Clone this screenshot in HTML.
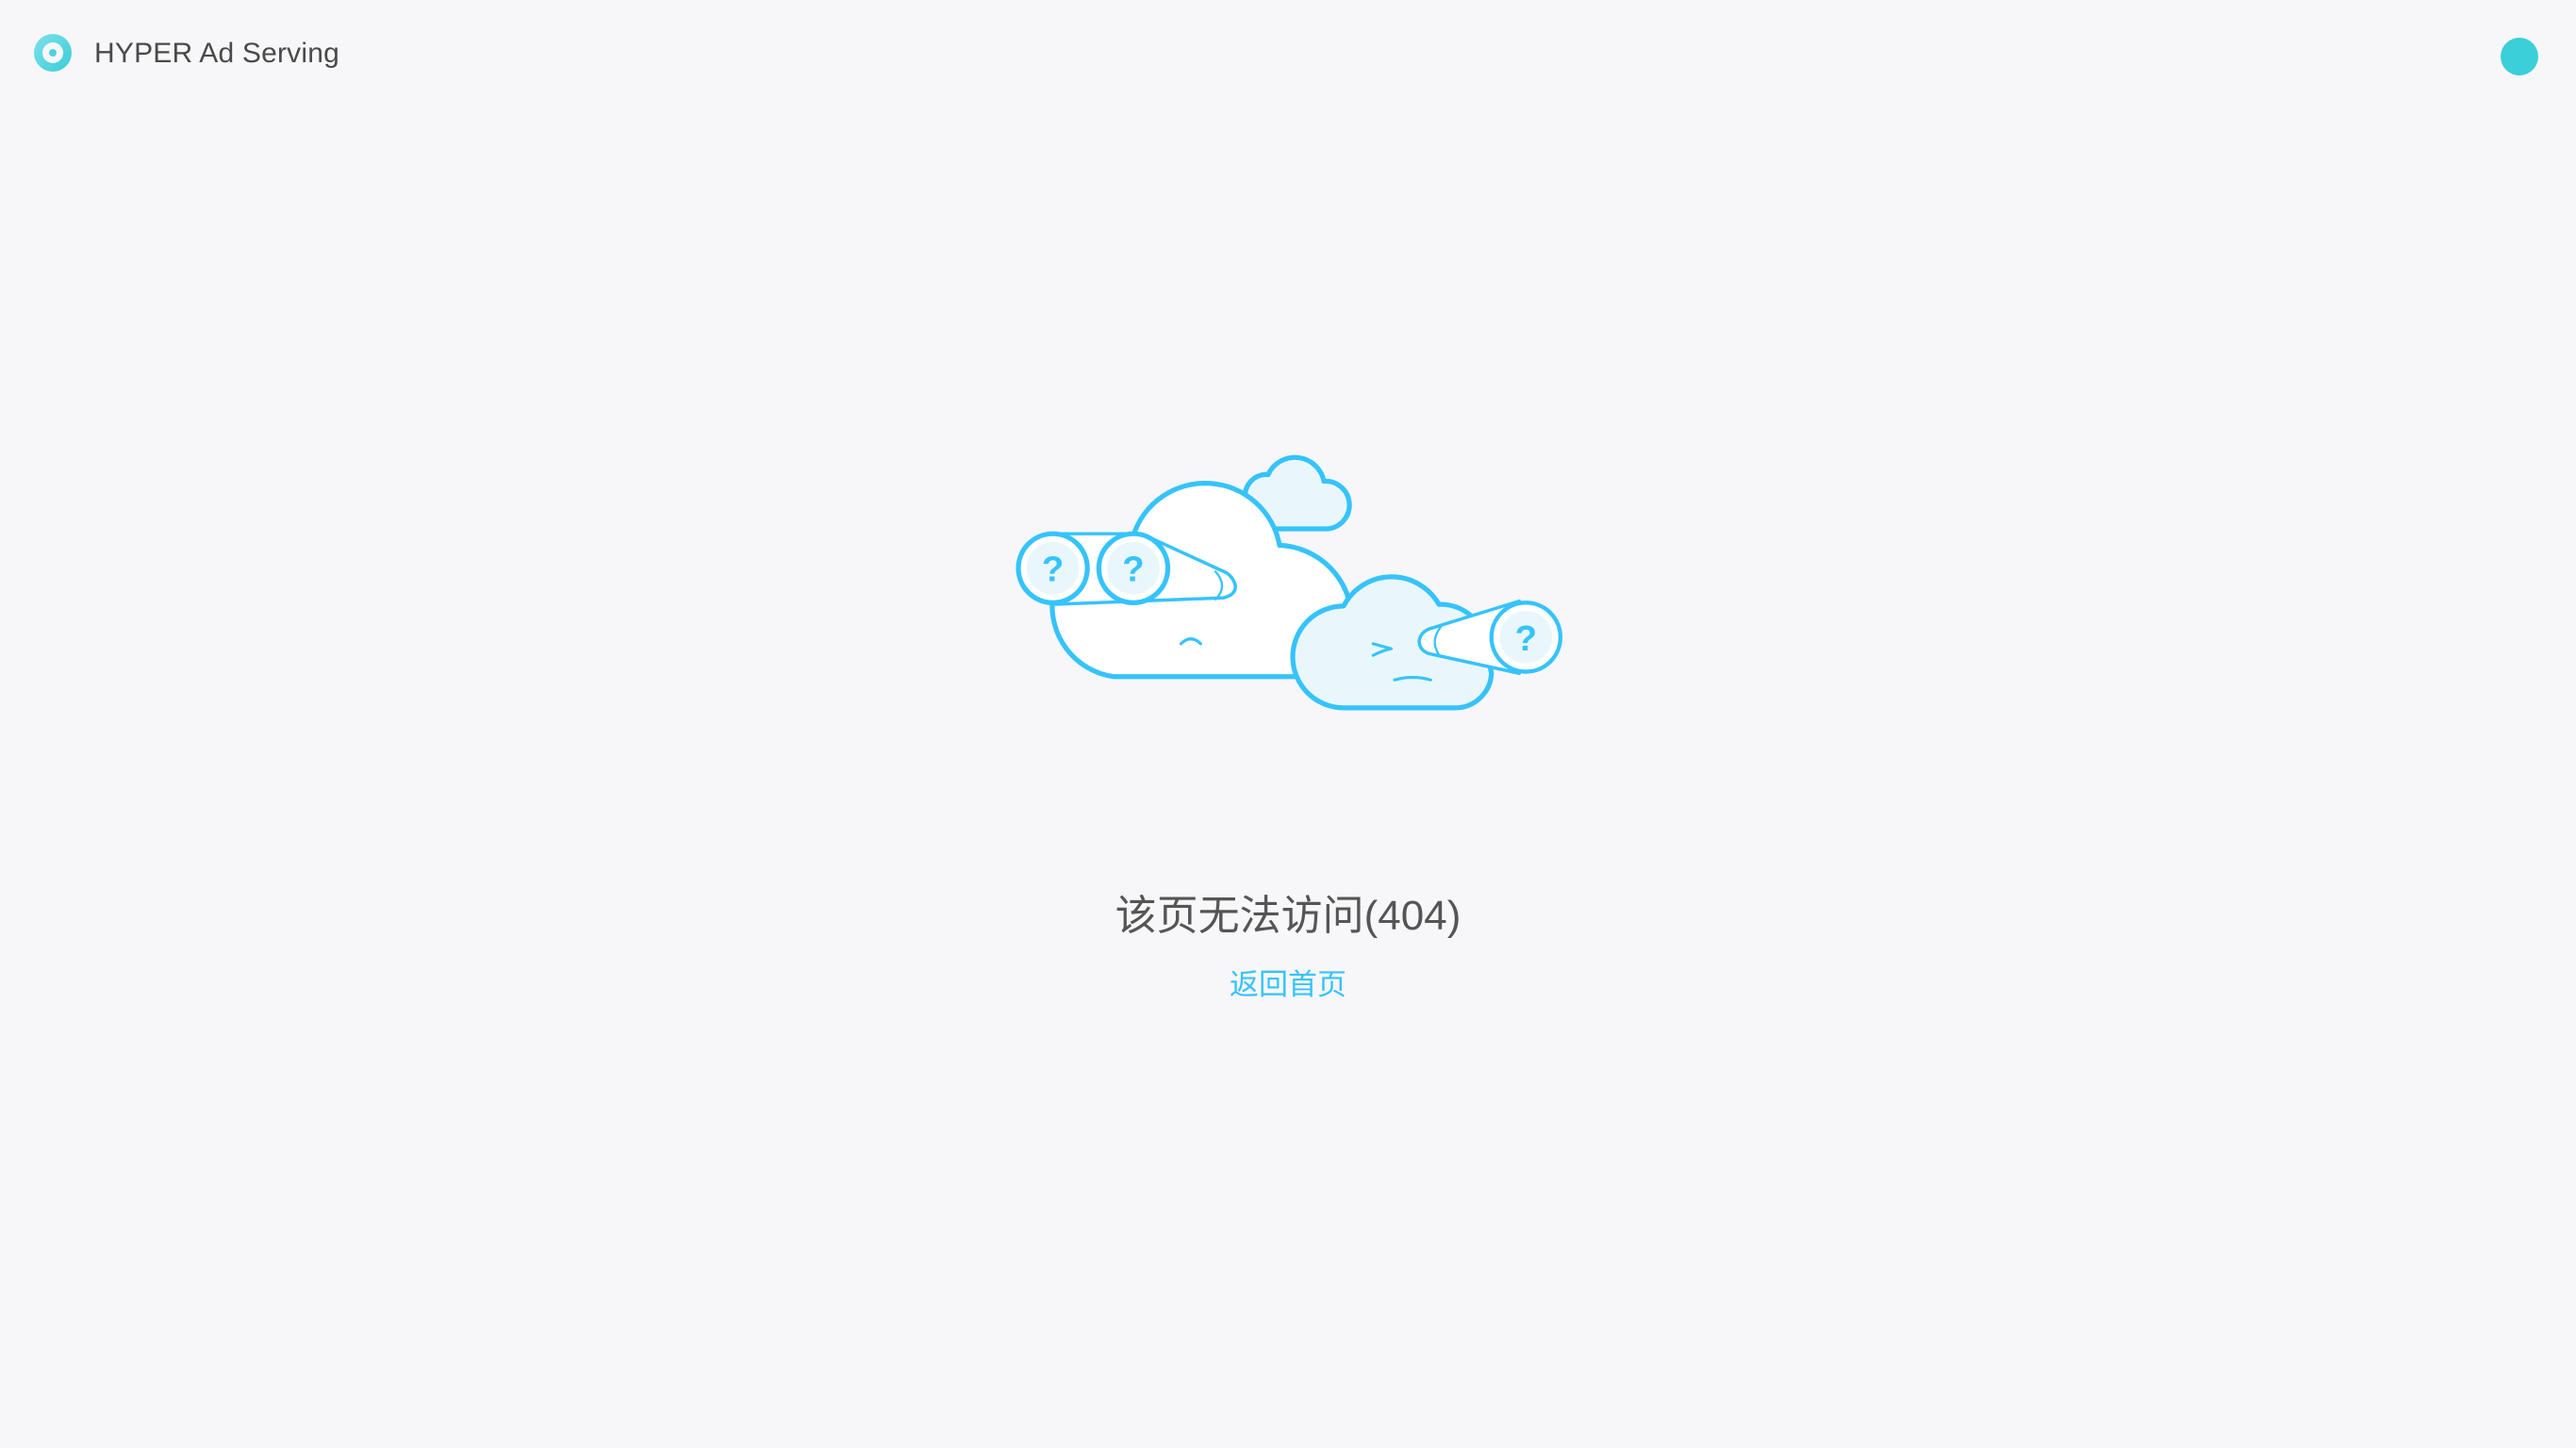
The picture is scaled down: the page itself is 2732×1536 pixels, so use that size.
<!DOCTYPE html>
<html><head><meta charset="utf-8">
<style>
html,body{margin:0;padding:0;width:2732px;height:1536px;background:#f7f7f9;overflow:hidden;font-family:"Liberation Sans","Noto Sans CJK SC",sans-serif;}
.logo{position:absolute;left:36px;top:36px;width:40px;height:40px;border-radius:50%;background:linear-gradient(135deg,#7fe0ea,#36cfd8);}
.logo:after{content:"";position:absolute;left:9px;top:9px;width:22px;height:22px;border-radius:50%;background:#f7f7f9;}
.logo:before{content:"";position:absolute;left:16px;top:16px;width:8px;height:8px;border-radius:50%;background:#4fd3de;z-index:2;}
.brand{position:absolute;left:100px;top:37px;font-size:30px;color:#4a4a4a;line-height:40px;letter-spacing:0.2px;}
.avatar{position:absolute;left:2652px;top:40px;width:40px;height:40px;border-radius:50%;background:#3bcfda;}
svg{position:absolute;left:0;top:0;}
.t1{position:absolute;left:0;width:2732px;top:940px;text-align:center;font-size:44px;line-height:64px;color:#555;}
.t2{position:absolute;left:0;width:2732px;top:1023px;text-align:center;font-size:31px;line-height:44px;color:#36c3fc;}
</style></head><body>
<div class="logo"></div>
<div class="brand">HYPER Ad Serving</div>
<div class="avatar"></div>
<svg width="2732" height="1536" viewBox="0 0 1568.3 881.7" fill="none" stroke="#36c3fc" stroke-width="3" stroke-linejoin="round" stroke-linecap="round">
  <path d="M758,302 A13,13 0 0 1 772,289 A18,18 0 0 1 806,293 A14.5,14.5 0 0 1 808,322 L775,322 Z" fill="#e9f7fd"/>
  <path d="M678,412 A43,43 0 0 1 690,326 A46,46 0 0 1 779,332 A46,46 0 0 1 823,376 L823,390 A22,22 0 0 1 801,412 Z" fill="#fff"/>
  <path d="M719,392 Q725,386 731,392" stroke-width="1.8"/>
  <path d="M641,368 L745,364 Q753,362 752,356 Q750,350 745,348 L695,325 L641,325 Z" fill="#fff" stroke-width="2"/>
  <path d="M740,348 Q748,357 740,365" stroke-width="1.3"/>
  <circle cx="641" cy="346" r="21" fill="#fff"/>
  <circle cx="641" cy="346" r="16" fill="#e9f7fd" stroke="none"/>
  <circle cx="690" cy="346" r="21" fill="#fff"/>
  <circle cx="690" cy="346" r="16" fill="#e9f7fd" stroke="none"/>
  <path d="M818,431 A31,31 0 0 1 818,369 A33,33 0 0 1 876,368 A28,28 0 0 1 905,394 L908,410 A22,22 0 0 1 886,431 Z" fill="#e9f7fd"/>
  <path d="M836,392 L847,395 Q842,396 836,399" stroke-width="1.8"/>
  <path d="M849,414 Q860,411 871,414" stroke-width="1.8"/>
  <path d="M870,383 L925,366 L925,410 L870,398 Q864,396 864,390 Q865,385 870,383 Z" fill="#fff" stroke-width="2"/>
  <path d="M877,382 Q870,391 877,400" stroke-width="1.3"/>
  <circle cx="929" cy="388" r="21" fill="#fff" stroke-width="2.5"/>
  <circle cx="929" cy="388" r="16" fill="#e9f7fd" stroke="none"/>
  <g fill="#36c3fc" stroke="none" font-family="Liberation Sans, sans-serif" font-size="22" font-weight="bold" text-anchor="middle">
    <text x="641" y="354">?</text>
    <text x="690" y="354">?</text>
    <text x="929" y="396">?</text>
  </g>
</svg>
<div class="t1">该页无法访问(404)</div>
<div class="t2">返回首页</div>
</body></html>
